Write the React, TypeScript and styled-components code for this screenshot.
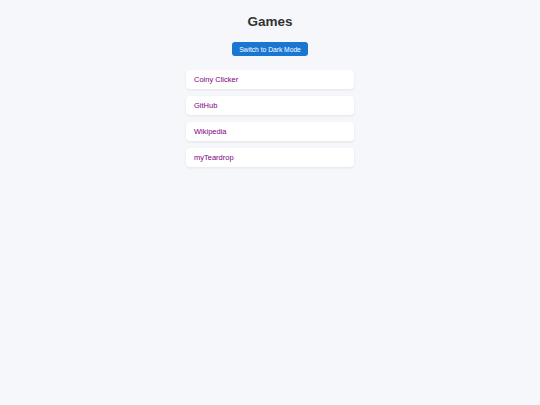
import React from "react";
import styled, { createGlobalStyle } from "styled-components";

const Global = createGlobalStyle`
  html, body { margin: 0; padding: 0; background: #f5f7fb; }
  body { font-family: "Liberation Sans", Arial, sans-serif; }
`;

const Page = styled.div`
  display: flex;
  flex-direction: column;
  align-items: center;
  padding-top: 13px;
  min-height: 405px;
  box-sizing: border-box;
`;

const Title = styled.h1`
  margin: 0;
  font-size: 13.5px;
  font-weight: 700;
  color: #333;
  line-height: 17px;
`;

const ToggleButton = styled.button`
  margin-top: 12px;
  height: 14px;
  padding: 0 7px;
  border: none;
  border-radius: 3px;
  background: #1976d2;
  color: #fff;
  font-family: "Liberation Sans", Arial, sans-serif;
  font-size: 6.7px;
  cursor: pointer;
`;

const List = styled.ul`
  list-style: none;
  margin: 14px 0 0;
  padding: 0;
  width: 168px;
  display: flex;
  flex-direction: column;
  gap: 7px;
`;

const Item = styled.li`
  background: #fff;
  border-radius: 4px;
  box-shadow: 0 1px 3px rgba(0, 0, 0, 0.08);
  height: 19px;
  display: flex;
  align-items: center;
  padding: 0 8px;
`;

const Link = styled.a`
  color: #800080;
  text-decoration: none;
  font-size: 7.5px;
`;

const games = ["Coiny Clicker", "GitHub", "Wikipedia", "myTeardrop"];

export default function App() {
  return (
    <>
      <Global />
      <Page>
        <Title>Games</Title>
        <ToggleButton>Switch to Dark Mode</ToggleButton>
        <List>
          {games.map((g) => (
            <Item key={g}>
              <Link href="#">{g}</Link>
            </Item>
          ))}
        </List>
      </Page>
    </>
  );
}
